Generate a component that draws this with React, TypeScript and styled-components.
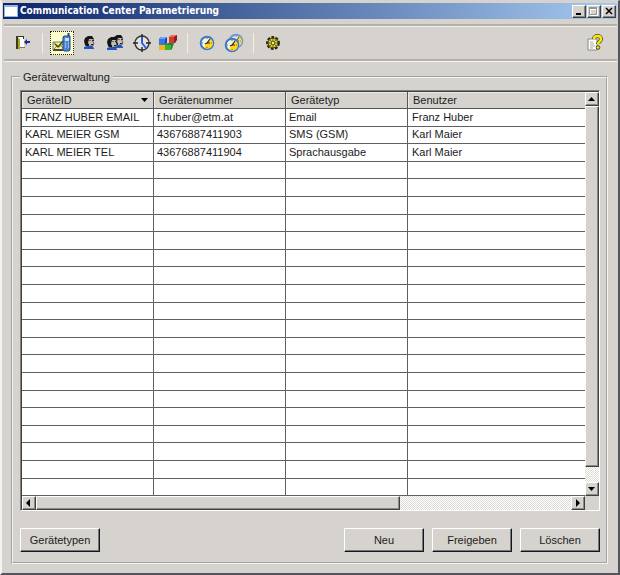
import React from "react";
import styled, { createGlobalStyle, css } from "styled-components";

const face = "#d6d3ce";

const GlobalStyle = createGlobalStyle`
  * { box-sizing: border-box; }
  body {
    margin: 0;
    background: ${face};
    color: #1c1c1c;
    font: 11px/14px "Liberation Sans", Arial, sans-serif;
  }
  button { font: inherit; color: inherit; }
`;

const raised = css`
  background: ${face};
  border: 1px solid;
  border-color: #fff #404040 #404040 #fff;
  box-shadow: inset -1px -1px 0 #8c8a86;
`;

const Window = styled.main`
  display: flex;
  flex-direction: column;
  min-height: 100vh;
  padding: 2px 1px 9px 0;
  background: ${face};
  border: solid;
  border-width: 1px 2px 2px 2px;
  border-color: ${face} #55555a #55555a #f4f3f0;
`;

const TitleBar = styled.header`
  display: flex;
  align-items: center;
  height: 16px;
  margin-left: 1px;
  padding: 0 1px;
  background: linear-gradient(to right, #0a246a, #a6caf0);
`;

const WindowTitle = styled.h1`
  flex: 1;
  margin: 0 0 0 2px;
  color: #fff;
  font: bold 10px/14px "DejaVu Sans Condensed", "DejaVu Sans", sans-serif;
  white-space: nowrap;
`;

const WindowControls = styled.div`
  display: flex;
  gap: 1px;
`;

const CaptionButton = styled.button`
  ${raised}
  display: grid;
  place-items: center;
  width: 14px;
  height: 13px;
  padding: 0;
`;

const Toolbar = styled.nav`
  display: flex;
  align-items: center;
  height: 37px;
  margin: 5px 0 1px 2px;
  padding: 0 10px 0 7px;
  border: solid #b4b1ac;
  border-width: 2px 0;
  box-shadow: 0 1px 0 #f4f3f0, inset 0 1px 0 #f0eeea;
`;

const ToolGroup = styled.div<{ $width: number }>`
  display: flex;
  justify-content: space-between;
  width: ${(p) => p.$width}px;
`;

const ToolButton = styled.button<{ $active?: boolean }>`
  display: grid;
  place-items: center;
  width: 24px;
  height: 24px;
  padding: 0;
  background: ${(p) => (p.$active ? "#ffffcc" : "transparent")};
  border: ${(p) => (p.$active ? "1px dotted #222" : "0")};
`;

const Divider = styled.span`
  width: 1px;
  height: 20px;
  margin: 0 7px;
  background: #f0eeea;
`;

const Spacer = styled.span`
  flex: 1;
`;

const Group = styled.fieldset`
  display: flex;
  flex: 1;
  flex-direction: column;
  gap: 17px;
  min-width: 0;
  margin: 8px 9px 0;
  padding: 6px 6px 10px 7px;
  border: 2px groove #f4f4f6;
`;

const GroupTitle = styled.legend`
  padding: 0 3px;
`;

const GridFrame = styled.div`
  display: grid;
  flex: 1;
  grid-template-columns: 1fr 14px;
  grid-template-rows: 1fr 14px;
  border: 1px solid;
  border-color: #808080 #fff #fff #808080;
  box-shadow: inset 1px 1px 0 #404040;
  padding: 1px 0 0 1px;
`;

const TableView = styled.div`
  min-width: 0;
  overflow: hidden;
  background: #fff;
`;

const Table = styled.table`
  width: 100%;
  table-layout: fixed;
  border-collapse: separate;
  border-spacing: 0;
`;

const Column = styled.col<{ $width?: number }>`
  width: ${(p) => (p.$width ? `${p.$width}px` : "auto")};
`;

const HeadCell = styled.th`
  height: 17px;
  padding: 0 4px 0 5px;
  background: ${face};
  border: solid #555;
  border-width: 0 1px 1px 0;
  box-shadow: inset 1px 1px 0 #eceae6;
  font-weight: normal;
  text-align: left;
  white-space: nowrap;
  &:last-child { border-right: 0; }
`;

const HeadContent = styled.div`
  display: flex;
  align-items: center;
  justify-content: space-between;
`;

const Row = styled.tr`
  height: 18px;
  &:nth-child(5n + 2), &:nth-child(5n + 4) { height: 17px; }
`;

const Cell = styled.td`
  padding: 0 0 2px 3px;
  border: solid #606060;
  border-width: 0 1px 1px 0;
  line-height: 14px;
  white-space: nowrap;
  &:last-child { border-right: 0; padding-left: 4px; }
`;

const ScrollBar = styled.div<{ $vertical?: boolean }>`
  display: flex;
  flex-direction: ${(p) => (p.$vertical ? "column" : "row")};
  min-width: 0;
  background: repeating-conic-gradient(#fff 0 25%, #dedbd6 0 50%) 0 0 / 2px 2px;
`;

const ScrollButton = styled.button`
  ${raised}
  display: grid;
  place-items: center;
  flex: none;
  width: 14px;
  height: 14px;
  padding: 0;
`;

const Track = styled.div<{ $vertical?: boolean }>`
  display: flex;
  flex: 1;
  flex-direction: ${(p) => (p.$vertical ? "column" : "row")};
`;

const Thumb = styled.div<{ $share: number }>`
  ${raised}
  flex: 0 0 ${(p) => p.$share}%;
`;

const Actions = styled.div`
  display: flex;
  gap: 8px;
`;

const ActionButton = styled.button`
  width: 80px;
  height: 24px;
  padding: 0;
  background: ${face};
  border: 1px solid;
  border-color: #fff #16161e #16161e #fff;
  box-shadow: inset -1px -1px 0 #77757a;
`;

const Arrow = ({ d }: { d: string }) => (
  <svg width="8" height="8" viewBox="0 0 8 8" aria-hidden="true">
    <path d={d} fill="#000" />
  </svg>
);

const DoorIcon = () => (
  <svg width="16" height="16" viewBox="0 0 16 16">
    <path d="M3 2h6v11H3z" fill="#fff" />
    <path d="M3 1h6v3h-1V2H3z" fill="#33332c" />
    <path d="M5 12h5v1H5z" fill="#77756c" />
    <path d="M2 2l3 2v11l-3-2z" fill="#a9a52f" />
    <path d="M1 1h2v13H1z" fill="#3d3c18" />
    <path d="M9 7l3-3v2h3v2h-3v2z" fill="#1d2e93" />
  </svg>
);

const DevicesIcon = () => (
  <svg width="22" height="22" viewBox="0 0 22 22">
    <path d="M2 10h13v8H2z" fill="#f7eea0" stroke="#777" />
    <path d="M2 18h13" stroke="#222" strokeWidth="1.5" />
    <path d="M2 10l6 5 6-5M2 18l4-4M14 18l-4-4" fill="none" stroke="#8a8431" />
    <path d="M4 12l3 3 5-6" fill="none" stroke="#3f5513" strokeWidth="1.5" />
    <path d="M13 4h6v14l-1 1h-5l-1-1V5z" fill="#4c86d4" stroke="#1f478f" />
    <path d="M17.5 1v3" stroke="#1f478f" strokeWidth="2" />
    <path d="M14 6h4v3h-4z" fill="#c5e0fa" />
    <path d="M14 11h1m2 0h1m-4 2h1m2 0h1m-4 2h1m2 0h1" stroke="#d8edff" />
  </svg>
);

const Person = ({ x = 0, y = 0 }: { x?: number; y?: number }) => (
  <g transform={`translate(${x} ${y})`}>
    <path d="M1 13v-2l3-1h5l2 2v1z" fill="#2456c3" />
    <path d="M2 9L1 5l1-3 3-2h4l2 3-2 1-3 6H3z" fill="#151515" />
    <path d="M6 3h4v3l1 1-1 3H7L5 7z" fill="#c5bdb5" />
    <path d="M6.500 4.500h1M9 4.500h2M8 8.500h2" stroke="#222" />
    <path d="M10 3v3l1 1-1 3H7" fill="none" stroke="#3b3b3b" strokeWidth=".7" />
  </g>
);

const UserIcon = () => (
  <svg width="16" height="16" viewBox="0 0 16 16">
    <Person x={2} y={1} />
  </svg>
);

const UsersIcon = () => (
  <svg width="18" height="16" viewBox="0 0 18 16">
    <Person x={6} />
    <Person x={0} y={2} />
  </svg>
);

const TimeIcon = () => (
  <svg width="20" height="20" viewBox="0 0 20 20">
    <circle cx="10" cy="10" r="7" fill="#e3e2e0" stroke="#33333a" strokeWidth="1.4" />
    <path d="M10 1v5M10 14v5M1 10h5M14 10h5" stroke="#222" strokeWidth="1.4" />
    <path d="M10 5v5l4 5" fill="none" stroke="#2f5be6" strokeWidth="2" />
  </svg>
);

const BlocksIcon = () => (
  <svg width="20" height="18" viewBox="0 0 20 18">
    <path d="M1 10h7v6H1z" fill="#f2b71c" />
    <path d="M7 11l3-2h6l-2 6-1 1H7z" fill="#218b27" />
    <path d="M7 11h6v5H7z" fill="#43af36" />
    <path d="M1 5l2-2h6v6l-2 2H1z" fill="#164aa3" />
    <path d="M1 5h6v6H1z" fill="#3678de" />
    <path d="M1 5l2-2h6L7 5z" fill="#71a4ef" />
    <path d="M11 3l3-2h5v5l-2 3h-6z" fill="#8d1c20" />
    <path d="M11 3h5v6h-5z" fill="#dc3832" />
    <path d="M11 3l3-2h5l-3 2z" fill="#f26b5e" />
  </svg>
);

const Dial = ({ x, y }: { x: number; y: number }) => (
  <g transform={`translate(${x} ${y})`}>
    <circle r="6.3" fill="#f5f3dc" stroke="#3a78d0" strokeWidth="2" />
    <path d="M0 0L4-4A5.4 5.4 0 0 1-3 4.500z" fill="#ffd51e" />
    <path d="M3-4L0 0l-2 1M0 0h3" fill="none" stroke="#252525" strokeWidth="1.2" />
    <path d="M0-5v1M0 4v1M-5 0h1M4 0h1" stroke="#6d6234" />
  </g>
);

const DialIcon = () => (
  <svg width="16" height="16" viewBox="0 0 16 16">
    <Dial x={8} y={8} />
  </svg>
);

const DialsIcon = () => (
  <svg width="20" height="20" viewBox="0 0 20 20">
    <g opacity=".65">
      <Dial x={12} y={8} />
    </g>
    <Dial x={8} y={12} />
  </svg>
);

const GearIcon = () => (
  <svg width="16" height="16" viewBox="0 0 16 16">
    <circle cx="8" cy="8" r="5.7" fill="#b8ac20" stroke="#25230e" strokeWidth="2.4" strokeDasharray="2.7 1.4" />
    <circle cx="8" cy="8" r="4.8" fill="#e0d640" stroke="#4b460d" />
    <path d="M8 4v8M4 8h8M5 5l6 6M11 5l-6 6" stroke="#4a4714" strokeWidth=".8" />
    <circle cx="8" cy="8" r="1.8" fill="#f5ee75" stroke="#39370f" strokeWidth=".7" />
  </svg>
);

const HelpIcon = () => (
  <svg width="18" height="18" viewBox="0 0 18 18">
    <path d="M2 5h9v11H2z" fill="#fff" stroke="#888" />
    <path d="M4 8h3M4 10h4M4 12h5M4 14h3" stroke="#aaa" />
    <path d="M8 5c0-4 7-4 7 0 0 3-3 2.500-3 5" fill="none" stroke="#4b4700" strokeWidth="4" />
    <path d="M8 5c0-4 7-4 7 0 0 3-3 2.500-3 5" fill="none" stroke="#f6e61d" strokeWidth="2.5" />
    <circle cx="12" cy="13.500" r="1.8" fill="#f6e61d" stroke="#4b4700" />
  </svg>
);

const AppIcon = () => (
  <svg width="14" height="12" viewBox="0 0 14 12" aria-hidden="true">
    <path d="M0 0h14v12H0z" fill="#91b7ea" />
    <path d="M1 2h12v9H1z" fill="#fff" />
  </svg>
);

const devices = [
  ["FRANZ HUBER EMAIL", "f.huber@etm.at", "Email", "Franz Huber"],
  ["KARL MEIER GSM", "43676887411903", "SMS (GSM)", "Karl Maier"],
  ["KARL MEIER TEL", "43676887411904", "Sprachausgabe", "Karl Maier"],
];
const rows = [...devices, ...Array.from({ length: 19 }, () => ["", "", "", ""])];

const views = [
  { label: "Geräte", icon: <DevicesIcon />, active: true },
  { label: "Benutzer", icon: <UserIcon /> },
  { label: "Benutzergruppen", icon: <UsersIcon /> },
  { label: "Zeiten", icon: <TimeIcon /> },
  { label: "Bausteine", icon: <BlocksIcon /> },
];

export default function App() {
  return (
    <>
      <GlobalStyle />
      <Window>
        <TitleBar>
          <AppIcon />
          <WindowTitle>Communication Center Parametrierung</WindowTitle>
          <WindowControls>
            <CaptionButton aria-label="Minimieren">
              <svg width="10" height="9" viewBox="0 0 10 9"><path d="M2 6h5v2H2z" /></svg>
            </CaptionButton>
            <CaptionButton aria-label="Maximieren" disabled>
              <svg width="10" height="9" viewBox="0 0 10 9">
                <path d="M1.500 1.500h7v7h-7zM1 2.500h8" fill="none" stroke="#fff" />
                <path d="M.5.5h7v7h-7zM0 1.500h8" fill="none" stroke="#96948f" />
              </svg>
            </CaptionButton>
            <CaptionButton aria-label="Schließen">
              <svg width="10" height="9" viewBox="0 0 10 9">
                <path d="M2 1l6 6M8 1L2 7" stroke="#000" strokeWidth="1.500" />
              </svg>
            </CaptionButton>
          </WindowControls>
        </TitleBar>

        <Toolbar aria-label="Werkzeuge">
          <ToolButton aria-label="Beenden"><DoorIcon /></ToolButton>
          <Divider />
          <ToolGroup $width={130}>
            {views.map((v) => (
              <ToolButton key={v.label} aria-label={v.label} $active={v.active}>{v.icon}</ToolButton>
            ))}
          </ToolGroup>
          <Divider />
          <ToolGroup $width={51}>
            <ToolButton aria-label="Zeitprogramm"><DialIcon /></ToolButton>
            <ToolButton aria-label="Zeitprogramme"><DialsIcon /></ToolButton>
          </ToolGroup>
          <Divider />
          <ToolButton aria-label="Einstellungen"><GearIcon /></ToolButton>
          <Spacer />
          <ToolButton aria-label="Hilfe"><HelpIcon /></ToolButton>
        </Toolbar>

        <Group>
          <GroupTitle>Geräteverwaltung</GroupTitle>
          <GridFrame>
            <TableView>
              <Table>
                <colgroup>
                  <Column $width={132} />
                  <Column $width={132} />
                  <Column $width={122} />
                  <Column />
                </colgroup>
                <thead>
                  <tr>
                    <HeadCell scope="col" aria-sort="descending">
                      <HeadContent>
                        GeräteID
                        <Arrow d="M0 2h7L3.500 6z" />
                      </HeadContent>
                    </HeadCell>
                    <HeadCell scope="col">Gerätenummer</HeadCell>
                    <HeadCell scope="col">Gerätetyp</HeadCell>
                    <HeadCell scope="col">Benutzer</HeadCell>
                  </tr>
                </thead>
                <tbody>
                  {rows.map((row, r) => (
                    <Row key={r}>
                      {row.map((text, c) => <Cell key={c}>{text}</Cell>)}
                    </Row>
                  ))}
                </tbody>
              </Table>
            </TableView>
            <ScrollBar $vertical>
              <ScrollButton aria-label="Nach oben"><Arrow d="M0 6h7L3.500 2z" /></ScrollButton>
              <Track $vertical><Thumb $share={96} /></Track>
              <ScrollButton aria-label="Nach unten"><Arrow d="M0 2h7L3.500 6z" /></ScrollButton>
            </ScrollBar>
            <ScrollBar>
              <ScrollButton aria-label="Nach links"><Arrow d="M5 0v8L1 4z" /></ScrollButton>
              <Track><Thumb $share={68} /></Track>
              <ScrollButton aria-label="Nach rechts"><Arrow d="M2 0v8l4-4z" /></ScrollButton>
            </ScrollBar>
          </GridFrame>
          <Actions>
            <ActionButton>Gerätetypen</ActionButton>
            <Spacer />
            <ActionButton>Neu</ActionButton>
            <ActionButton>Freigeben</ActionButton>
            <ActionButton>Löschen</ActionButton>
          </Actions>
        </Group>
      </Window>
    </>
  );
}
